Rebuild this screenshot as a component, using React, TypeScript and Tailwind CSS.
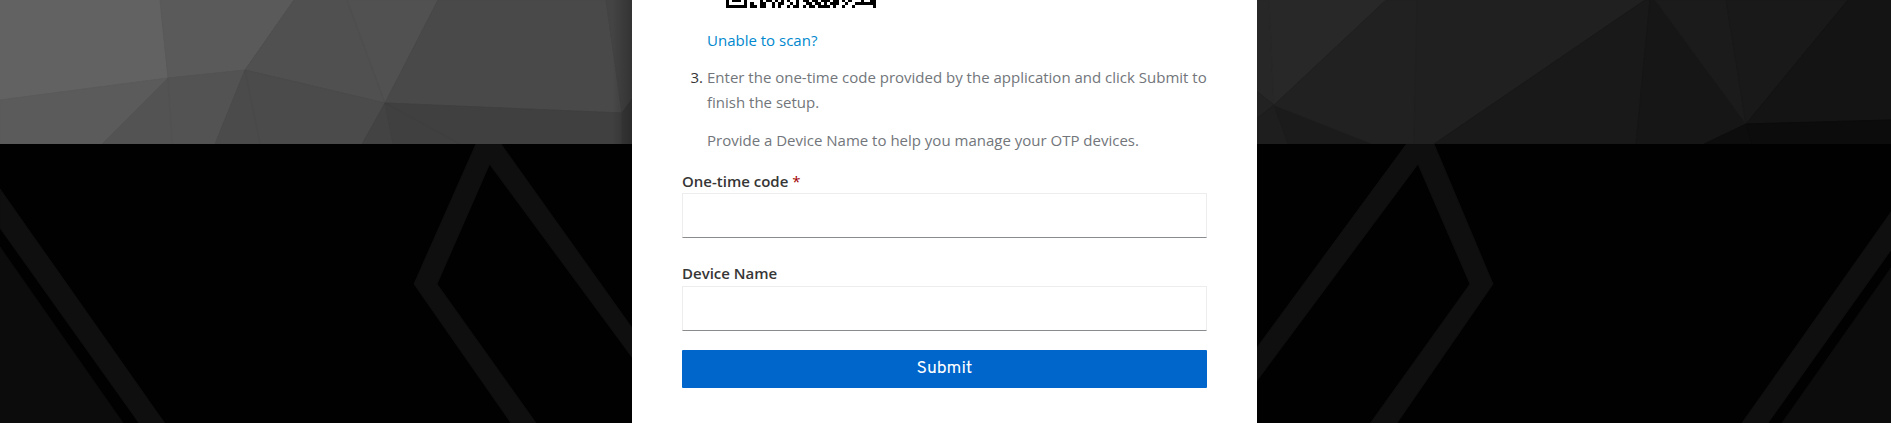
import React from "react";

type Shape = { p: string; f: string };

const facets: Shape[] = [
  { p: "0,0 160,0 168,78 0,100", f: "#626262" },
  { p: "160,0 294,0 245,70 168,78", f: "#5a5a5a" },
  { p: "0,100 168,78 102,144 0,144", f: "#5b5b5b" },
  { p: "168,78 245,70 215,144 102,144", f: "#535353" },
  { p: "294,0 348,0 385,103 245,70", f: "#505050" },
  { p: "347,0 438,0 385,103", f: "#515151" },
  { p: "245,70 385,103 362,144 215,144", f: "#4b4b4b" },
  { p: "438,0 606,0 622,113 385,103", f: "#494949" },
  { p: "385,103 393,144 362,144", f: "#434343" },
  { p: "385,103 622,113 622,144 393,144", f: "#404040" },
  { p: "606,0 640,0 640,88 622,113", f: "#444444" },
  { p: "622,113 640,88 640,144 622,144", f: "#3a3a3a" },
  { p: "1250,0 1269,0 1274,105 1250,86", f: "#272727" },
  { p: "1269,0 1386,0 1274,105", f: "#282828" },
  { p: "1250,86 1274,105 1250,124", f: "#222222" },
  { p: "1250,124 1274,105 1288,144 1250,144", f: "#1e1e1e" },
  { p: "1274,105 1373,144 1288,144", f: "#1b1b1b" },
  { p: "1386,0 1417,0 1414,144 1373,144 1274,105", f: "#212121" },
  { p: "1417,0 1645,0 1434,144 1414,144", f: "#202020" },
  { p: "1645,0 1650,0 1636,144 1434,144", f: "#191919" },
  { p: "1650,0 1655,0 1746,124 1704,144 1636,144", f: "#161616" },
  { p: "1655,0 1726,0 1746,124", f: "#1b1b1b" },
  { p: "1726,0 1848,0 1746,124", f: "#191919" },
  { p: "1848,0 1891,0 1891,120 1746,124", f: "#141414" },
  { p: "1746,124 1752,144 1704,144", f: "#0d0d0d" },
  { p: "1746,124 1891,120 1891,144 1752,144", f: "#0c0c0c" },
];

const bands: Shape[] = [
  { p: "0,189 164.5,423 139,423 0,228", f: "#0f0f0f" },
  { p: "0,247 123,423 0,423", f: "#0c0c0c" },
  { p: "476,144 501,144 640,339 640,368 489.5,164 437,284 536,423 511,423 414,284", f: "#0f0f0f" },
  { p: "1406.5,144 1434,144 1493,284 1397,423 1370.5,423 1470,284 1418,164 1250,390 1250,357", f: "#0f0f0f" },
  { p: "1891,212 1742,423 1768,423 1891,250", f: "#0f0f0f" },
  { p: "1891,268 1782,423 1891,423", f: "#0c0c0c" },
];

const toPolygon = (s: Shape) => <polygon key={s.p} points={s.p} fill={s.f} stroke={s.f} strokeWidth="1" strokeLinejoin="round" />;

function Backdrop() {
  return (
    <svg className="absolute inset-0" width="1891" height="423" viewBox="0 0 1891 423" aria-hidden="true">
      <defs>
        <linearGradient id="edge">
          <stop offset="0" stopColor="#000" stopOpacity="0" />
          <stop offset="1" stopColor="#000" stopOpacity="0.25" />
        </linearGradient>
      </defs>
      {facets.map(toPolygon)}
      <g fill="none" stroke="#000" strokeOpacity="0.02" strokeWidth="2">
        <path d="M168 78L172 144M245 70L260 144M347 0L385 103L460 144" />
      </g>
      <rect x="612" y="0" width="20" height="144" fill="url(#edge)" />
      <rect x="0" y="144" width="1891" height="279" fill="#010101" />
      <svg y="144" width="1891" height="279" viewBox="0 144 1891 279">
        {bands.map(toPolygon)}
      </svg>
    </svg>
  );
}

const qrRows = [
  "1011101000010110101010010110110111011010100010011",
  "1000001010011001011001010011011010111001001111111",
  "1111111011011001010010110101101111010010010000001",
];

function QrCode() {
  return (
    <svg className="ml-[19px] block" width="150" height="8" viewBox="0 1 49 8" preserveAspectRatio="none" shapeRendering="crispEdges" aria-hidden="true">
      {qrRows.map((row, y) =>
        row.split("").map((c, x) =>
          c === "1" ? <rect key={`${y}-${x}`} x={x} y={y * 3} width="1" height="3" /> : null,
        ),
      )}
    </svg>
  );
}

export default function App() {
  const label = "block h-[21px] text-[15px] leading-[21px] font-semibold text-[#363636]";
  const input = "block h-[45px] w-full border border-[#ededed] border-b-[#8a8d90] bg-white px-2 outline-none";
  return (
    <div className="relative flex h-[423px] w-[1891px] justify-center overflow-hidden bg-black font-['Open_Sans',sans-serif]">
      <Backdrop />
      <main className="relative mr-[2px] h-[423px] w-[625px] bg-white px-[50px] text-[15px] leading-[25px] text-[#72767b]">
        <div className="pl-[25px]">
          <QrCode />
          <a href="#" className="mt-5 block text-[#0088ce]">Unable to scan?</a>
        </div>
        <div className="mt-3 flex">
          <span className="w-[25px] shrink-0 pr-[4px] text-right text-[#363636]">3.</span>
          <div className="w-[508px] shrink-0">
            <p>Enter the one-time code provided by the application and click Submit to finish the setup.</p>
            <p className="mt-[13px]">Provide a Device Name to help you manage your OTP devices.</p>
          </div>
        </div>
        <form className="mt-[18px]">
          <label htmlFor="totp" className={label}>
            One-time code <span className="font-normal text-[#a30000]">*</span>
          </label>
          <input id="totp" type="text" className={`mt-px ${input}`} />
          <label htmlFor="device" className={`mt-[25px] ${label}`}>
            Device Name
          </label>
          <input id="device" type="text" className={`mt-[2px] ${input}`} />
          <button
            type="button"
            className="mt-[19px] block h-[38px] w-full rounded-[1px] bg-[#0066cc] font-['Overpass','Roboto',sans-serif] text-[17.5px] text-white"
          >
            Submit
          </button>
        </form>
      </main>
    </div>
  );
}
